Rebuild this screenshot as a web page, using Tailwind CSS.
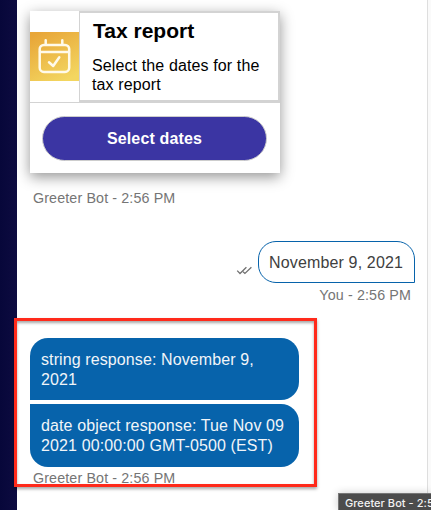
<!DOCTYPE html>
<html lang="en">
<head>
<meta charset="utf-8">
<title>Greeter Bot</title>
<script src="https://cdn.jsdelivr.net/npm/@tailwindcss/browser@4"></script>
</head>
<body class="relative flex h-[510px] w-[431px] overflow-hidden bg-[#fafafa] font-['Liberation_Sans',Arial,sans-serif] whitespace-nowrap">
  <aside class="w-[17px] shrink-0 bg-linear-to-r from-[#07073a] to-[#0d0b40]"></aside>
  <main class="flex w-[411px] shrink-0 flex-col items-start border-r border-[#dedede] bg-white pt-[11px] pl-[13px]">
    <section class="h-[162px] w-[250px] shrink-0 bg-white shadow-[0_4px_13px_rgba(0,0,0,0.42)]">
      <div class="flex h-[92px] border-b border-[#d3d3d3]">
        <div class="flex w-[49px] flex-col pt-[21px]">
          <svg class="h-[49px] w-[49px]" viewBox="0 0 49 49" fill="none">
            <defs>
              <linearGradient id="gold" x1="0.2" y1="0" x2="0.7" y2="1">
                <stop offset="0" stop-color="#e8a638"/>
                <stop offset="1" stop-color="#f3d660"/>
              </linearGradient>
            </defs>
            <rect width="49" height="49" fill="url(#gold)"/>
            <g stroke="#fffaea" stroke-width="2.5" stroke-linecap="round" stroke-linejoin="round">
              <rect x="9.7" y="12.9" width="29.5" height="27" rx="4.2"/>
              <path d="M10 20H39M15.7 8.3V12.5M32.3 8.3V12.5"/>
              <path d="M19 30.3L23.2 34L29.3 25.2"/>
            </g>
          </svg>
        </div>
        <div class="h-[91px] w-[201px] border-2 border-l border-[#d3d3d3] pl-[13px]">
          <h1 class="mt-[6px] text-[21px] leading-6 font-bold text-black">Tax report</h1>
          <p class="mt-[13px] -ml-px text-[16px] leading-[19px] tracking-[0.12px] text-black">Select the dates for the<br>tax report</p>
        </div>
      </div>
      <div class="pt-[13px] pl-[12px]">
        <button class="h-[45px] w-[225px] rounded-full border border-[#cdcdcd] bg-[#3b35a3] text-[16px] font-bold tracking-[0.15px] text-white">Select dates</button>
      </div>
    </section>
    <p class="mt-[16px] ml-[3px] text-[14.3px] leading-[18px] tracking-[0.12px] text-[#757575]">Greeter Bot - 2:56 PM</p>
    <div class="mt-[34px] flex w-full justify-end pr-[12px]">
      <svg class="mt-[24px] mr-[5px] h-[11px] w-[17px]" viewBox="0 0 17 11" fill="none" stroke="#707070" stroke-width="1.25">
        <path d="M1.2 5.6L4 8.5L10.4 2.2M7.1 6.8L8.9 8.5L15.4 2.2"/>
      </svg>
      <div class="h-[42px] w-[157px] rounded-[18px] rounded-br-none border border-[#0763ab] pt-[11px] pl-[10px] text-[16px] leading-[20px] tracking-[0.15px] text-[#404040]">November 9, 2021</div>
    </div>
    <p class="mt-[3px] mr-[16px] self-end text-[14.3px] leading-[18px] tracking-[0.12px] text-[#757575]">You - 2:56 PM</p>
    <div class="mt-[34px] h-[62px] w-[269px] shrink-0 rounded-[18px] rounded-bl-none bg-[#0763ab] pt-[12px] pl-[11px] text-[16px] leading-5 tracking-[0.1px] text-[#f1f5f9]">string response: November 9,<br>2021</div>
    <div class="mt-[4px] h-[63px] w-[269px] shrink-0 rounded-[18px] rounded-tl-none bg-[#0763ab] pt-[12px] pl-[11px] text-[16px] leading-5 tracking-[0.12px] text-[#f1f5f9]">date object response: Tue Nov 09<br>2021 00:00:00 GMT-0500 (EST)</div>
    <p class="mt-[2px] ml-[3px] text-[14.3px] leading-[18px] tracking-[0.12px] text-[#757575]">Greeter Bot - 2:56 PM</p>
  </main>
  <div class="absolute top-[318px] left-[14px] h-[169px] w-[303px] border-3 border-[#ff2a1b] shadow-[0_2px_3px_rgba(0,0,0,0.35),inset_0_2px_3px_rgba(0,0,0,0.35)]"></div>
  <div class="absolute top-[493px] left-[338px] h-[17px] w-[93px] overflow-hidden border border-r-0 border-b-0 border-[#777] bg-[#4c4c4c] pl-[6px] font-[Inter,sans-serif] text-[11px] leading-[19px] font-medium tracking-[0.05px] text-[#f2f2f2] shadow-[0_0_8px_rgba(0,0,0,0.2)]">Greeter Bot - 2:56 PM</div>
</body>
</html>
